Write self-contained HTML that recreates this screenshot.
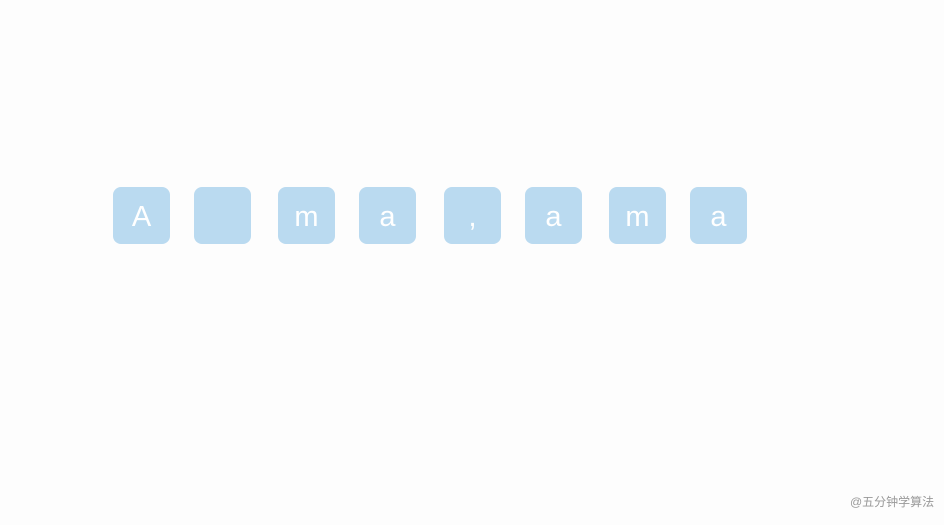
<!DOCTYPE html><html><head><style>
body{margin:0;width:944px;height:525px;background:#fdfdfd;position:relative;overflow:hidden;font-family:"Liberation Sans",sans-serif}
.b{position:absolute;top:187px;width:57px;height:57px;border-radius:8px;background:#badaf0;color:#fff;font-size:29px;line-height:60px;text-align:center;font-weight:300}
.w{position:absolute;left:850px;top:493px;font-size:12px;color:#999;font-family:"Liberation Sans","Noto Sans CJK SC",sans-serif}
</style></head><body>
<div class="b" style="left:113px">A</div>
<div class="b" style="left:194px"></div>
<div class="b" style="left:278px">m</div>
<div class="b" style="left:359px">a</div>
<div class="b" style="left:444px">,</div>
<div class="b" style="left:525px">a</div>
<div class="b" style="left:609px">m</div>
<div class="b" style="left:690px">a</div>
<div class="w">@五分钟学算法</div>
</body></html>
